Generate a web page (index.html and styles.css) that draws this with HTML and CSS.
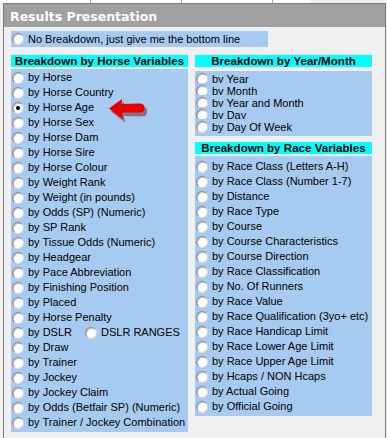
FILE: index.html
```html
<!DOCTYPE html>
<html lang="en">
<head>
    <meta charset="UTF-8">
    <title>Results Presentation</title>
    <link rel="stylesheet" href="styles.css">
</head>
<body>

    <div class="tabs">
        <span class="tab"></span>
        <span class="tab"></span>
        <span class="tab"></span>
    </div>

    <div class="panel">
        <div class="title">Results Presentation</div>

        <div class="content">
            <div class="summary opt"><span class="radio"></span>No Breakdown, just give me the bottom line</div>

            <div class="cols">
                <!-- Horse variables -->
                <div class="col">
                    <div class="head">Breakdown by Horse Variables</div>
                    <div class="list horse">
                        <div class="opt"><span class="radio"></span>by Horse</div>
                        <div class="opt"><span class="radio"></span>by Horse Country</div>
                        <div class="opt"><span class="radio checked"></span>by Horse Age</div>
                        <div class="opt"><span class="radio"></span>by Horse Sex</div>
                        <div class="opt"><span class="radio"></span>by Horse Dam</div>
                        <div class="opt"><span class="radio"></span>by Horse Sire</div>
                        <div class="opt"><span class="radio"></span>by Horse Colour</div>
                        <div class="opt"><span class="radio"></span>by Weight Rank</div>
                        <div class="opt"><span class="radio"></span>by Weight (in pounds)</div>
                        <div class="opt"><span class="radio"></span>by Odds (SP) (Numeric)</div>
                        <div class="opt"><span class="radio"></span>by SP Rank</div>
                        <div class="opt"><span class="radio"></span>by Tissue Odds (Numeric)</div>
                        <div class="opt"><span class="radio"></span>by Headgear</div>
                        <div class="opt"><span class="radio"></span>by Pace Abbreviation</div>
                        <div class="opt"><span class="radio"></span>by Finishing Position</div>
                        <div class="opt"><span class="radio"></span>by Placed</div>
                        <div class="opt"><span class="radio"></span>by Horse Penalty</div>
                        <div class="opt"><span class="radio"></span><span class="dslr">by DSLR</span><span class="radio"></span>DSLR RANGES</div>
                        <div class="opt"><span class="radio"></span>by Draw</div>
                        <div class="opt"><span class="radio"></span>by Trainer</div>
                        <div class="opt"><span class="radio"></span>by Jockey</div>
                        <div class="opt"><span class="radio"></span>by Jockey Claim</div>
                        <div class="opt"><span class="radio"></span>by Odds (Betfair SP) (Numeric)</div>
                        <div class="opt"><span class="radio"></span>by Trainer / Jockey Combination</div>
                    </div>
                </div>

                <div class="col">
                    <!-- Dates -->
                    <div class="head">Breakdown by Year/Month</div>
                    <div class="list dates">
                        <div class="opt"><span class="radio"></span>by Year</div>
                        <div class="opt"><span class="radio"></span>by Month</div>
                        <div class="opt"><span class="radio"></span>by Year and Month</div>
                        <div class="opt"><span class="radio"></span>by Day</div>
                        <div class="opt"><span class="radio"></span>by Day Of Week</div>
                    </div>

                    <!-- Race variables -->
                    <div class="head race-head">Breakdown by Race Variables</div>
                    <div class="list race">
                        <div class="opt"><span class="radio"></span>by Race Class (Letters A-H)</div>
                        <div class="opt"><span class="radio"></span>by Race Class (Number 1-7)</div>
                        <div class="opt"><span class="radio"></span>by Distance</div>
                        <div class="opt"><span class="radio"></span>by Race Type</div>
                        <div class="opt"><span class="radio"></span>by Course</div>
                        <div class="opt"><span class="radio"></span>by Course Characteristics</div>
                        <div class="opt"><span class="radio"></span>by Course Direction</div>
                        <div class="opt"><span class="radio"></span>by Race Classification</div>
                        <div class="opt"><span class="radio"></span>by No. Of Runners</div>
                        <div class="opt"><span class="radio"></span>by Race Value</div>
                        <div class="opt"><span class="radio"></span>by Race Qualification (3yo+ etc)</div>
                        <div class="opt"><span class="radio"></span>by Race Handicap Limit</div>
                        <div class="opt"><span class="radio"></span>by Race Lower Age Limit</div>
                        <div class="opt"><span class="radio"></span>by Race Upper Age Limit</div>
                        <div class="opt"><span class="radio"></span>by Hcaps / NON Hcaps</div>
                        <div class="opt"><span class="radio"></span>by Actual Going</div>
                        <div class="opt"><span class="radio"></span>by Official Going</div>
                    </div>
                </div>
            </div>
        </div>

        <!-- pointer drawn over the list -->
        <svg class="arrow" width="40" height="26" viewBox="0 0 40 26">
            <path d="M3 13 L16 3 L15.5 8.5 L34 8 Q39 8 39 13 Q39 18 34 18 L16 17.5 L17 24 Z" fill="#5a0000" opacity="0.45" transform="translate(1,1.5)"/>
            <path d="M2 11.5 L15 2 L14.5 7 L33 6.5 Q37.5 6.5 37.5 11 Q37.5 15.5 33 15.5 L15 15.5 L16 22 Z" fill="#e80000"/>
        </svg>
    </div>

</body>
</html>
```

FILE: styles.css
```css
body {
    margin: 0;
    background-color: #f0f0f0;
    font-family: "Liberation Sans", Arial, sans-serif;
    font-size: 11px;
    color: #000;
}

.tabs {
    display: flex;
    height: 3px;
    width: 310px;
    background-color: #fff;
}
.tab {
    width: 90px;
    border-right: 1px solid #b0b0b0;
}

.panel {
    position: relative;
    width: 381px;
    height: 434px;
    margin-left: 3px;
    border: 1px solid #7c7c7c;
    border-bottom: none;
    overflow: hidden;
}

.title {
    height: 23px;
    padding: 1px 0 0 6px;
    box-sizing: border-box;
    line-height: 23px;
    background-color: #a0a0a0;
    color: #fff;
    font-family: "DejaVu Sans", Verdana, sans-serif;
    font-weight: bold;
    font-size: 12.5px;
}

.content {
    padding: 4px 0 0 7px;
}

/* radio rows */
.opt {
    display: flex;
    align-items: center;
    height: 15px;
    line-height: 15px;
    padding-left: 1px;
    white-space: nowrap;
    overflow: hidden;
}
.radio {
    flex: none;
    position: relative;
    width: 10px;
    height: 10px;
    margin-right: 4px;
    border-radius: 50%;
    background-color: #fff;
    border: 1px solid #8a8a8a;
    border-right-color: #d8d8d8;
    border-bottom-color: #d8d8d8;
    box-shadow: inset 1px 1px 0 #c4c4c4;
}
.radio.checked::after {
    content: "";
    position: absolute;
    left: 3px;
    top: 3px;
    width: 4px;
    height: 4px;
    border-radius: 50%;
    background-color: #000;
}
.dslr {
    width: 57px;
}

.summary {
    width: 256px;
    height: 16px;
    line-height: 16px;
    background-color: #a6caf0;
}

.cols {
    display: flex;
    gap: 7px;
    margin-top: 8px;
}
.col {
    width: 177px;
}

.head {
    height: 12px;
    line-height: 12px;
    overflow: hidden;
    background-color: #00ffff;
    text-align: center;
    font-weight: bold;
    font-size: 11.6px;
}

.list {
    background-color: #a6caf0;
}
.horse {
    margin-top: 2px;
    padding: 1px 0 2px;
}
.dates {
    margin-top: 4px;
    padding: 0 0 5px;
}
/* rows overlap in the original, so descenders get cut off */
.dates .opt {
    height: 12px;
    line-height: 16.5px;
    align-items: flex-start;
}
.dates .opt .radio {
    margin-top: 2px;
}
.dates .opt:last-child {
    overflow: visible;
}
.race-head {
    margin-top: 6px;
}
.race {
    margin-top: 2px;
    padding: 3px 0 2px;
}

.arrow {
    position: absolute;
    left: 103px;
    top: 93px;
}
```
